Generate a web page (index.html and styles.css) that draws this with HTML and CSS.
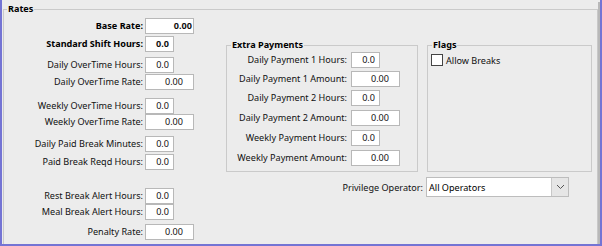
FILE: index.html
```
<!DOCTYPE html>
<html>
<head>
<meta charset="utf-8">
<link rel="stylesheet" href="styles.css">
</head>
<body>
<div class="window">
  <div class="client">
    <fieldset class="group rates">
      <legend>Rates</legend>
      <div class="rates-body">
        <div class="col-left">
          <div class="row g2"><span class="lbl strong">Base Rate:</span><span class="box wide strong tight">0.00</span></div>
          <div class="row g2"><span class="lbl strong">Standard Shift Hours:</span><span class="box small strong">0.0</span></div>
          <div class="row g5"><span class="lbl">Daily OverTime Hours:</span><span class="box small">0.0</span></div>
          <div class="row g1"><span class="lbl">Daily OverTime Rate:</span><span class="box wide">0.00</span></div>
          <div class="row g8"><span class="lbl">Weekly OverTime Hours:</span><span class="box small">0.0</span></div>
          <div class="row g0"><span class="lbl">Weekly OverTime Rate:</span><span class="box wide">0.00</span></div>
          <div class="row g6"><span class="lbl">Daily Paid Break Minutes:</span><span class="box small">0.0</span></div>
          <div class="row g2"><span class="lbl">Paid Break Reqd Hours:</span><span class="box small">0.0</span></div>
          <div class="row g18"><span class="lbl">Rest Break Alert Hours:</span><span class="box small">0.0</span></div>
          <div class="row g0"><span class="lbl">Meal Break Alert Hours:</span><span class="box small">0.0</span></div>
          <div class="row g4"><span class="lbl">Penalty Rate:</span><span class="box wide">0.00</span></div>
        </div>
        <div class="col-right">
          <div class="panels">
            <fieldset class="group extra">
              <legend>Extra Payments</legend>
              <div class="row g0"><span class="lbl">Daily Payment 1 Hours:</span><span class="box small">0.0</span></div>
              <div class="row g3"><span class="lbl">Daily Payment 1 Amount:</span><span class="box wide">0.00</span></div>
              <div class="row g3"><span class="lbl">Daily Payment 2 Hours:</span><span class="box small">0.0</span></div>
              <div class="row g4"><span class="lbl">Daily Payment 2 Amount:</span><span class="box wide">0.00</span></div>
              <div class="row g4"><span class="lbl">Weekly Payment Hours:</span><span class="box small">0.0</span></div>
              <div class="row g4"><span class="lbl">Weekly Payment Amount:</span><span class="box wide">0.00</span></div>
            </fieldset>
            <fieldset class="group flags">
              <legend>Flags</legend>
              <label class="check"><span class="checkbox"></span><span>Allow Breaks</span></label>
            </fieldset>
          </div>
          <div class="priv-row">
            <span class="priv-lbl">Privilege Operator:</span>
            <div class="combo">
              <span class="combo-text">All Operators</span>
              <span class="combo-btn">
                <svg width="9" height="6" viewBox="0 0 9 6"><path d="M1 1 L4.5 4.5 L8 1" fill="none" stroke="#555" stroke-width="1"/></svg>
              </span>
            </div>
          </div>
        </div>
      </div>
    </fieldset>
  </div>
</div>
</body>
</html>
```
FILE: styles.css
```
* { box-sizing: border-box; }
html, body { margin: 0; padding: 0; background: #ececec; }
body {
  font-family: "Noto Sans", "Open Sans", sans-serif;
  font-size: 9.1px;
  color: #111;
}
.window {
  width: 602px;
  height: 246px;
  background: #ececec;
  border-left: 2px solid #7474d4;
  border-right: 2px solid #7474d4;
  border-bottom: 2px solid #7474d4;
  overflow: hidden;
}
.client {
  height: 100%;
  border-right: 2px solid #b8b8b8;
  padding-left: 1px;
  padding-right: 0;
}
.group {
  margin: 0;
  padding: 0;
  border: 1px solid #cacaca;
  min-width: 0;
}
.group > legend {
  padding: 0 1px;
  margin-left: 3px;
  font-weight: bold;
  line-height: 14px;
  color: #000;
}
.rates {
  margin-top: 2px;
  height: 260px;
  border-right-color: #c8c8c8;
}
.rates > legend { margin-left: 3px; }
.rates-body {
  display: flex;
  align-items: flex-start;
}
.col-left {
  width: 190px;
  display: flex;
  flex-direction: column;
}
.row {
  display: flex;
  align-items: center;
  height: 16px;
}
.g0 { margin-top: 0; }
.g1 { margin-top: 1px; }
.g2 { margin-top: 2px; }
.g3 { margin-top: 3px; }
.g4 { margin-top: 4px; }
.g5 { margin-top: 5px; }
.g6 { margin-top: 6px; }
.g8 { margin-top: 8px; }
.g18 { margin-top: 18px; }
.lbl {
  width: 139px;
  flex: none;
  text-align: right;
  white-space: nowrap;
  line-height: 16px;
}
.strong { font-weight: bold; color: #000; }
.box {
  flex: none;
  margin-left: 2px;
  height: 16px;
  background: #fff;
  border: 1px solid #b8b8b8;
  text-align: right;
  line-height: 14px;
  color: #111;
}
.box.small { width: 29px; padding-right: 4px; }
.box.wide { width: 49px; padding-right: 10px; }
.box.tight { padding-right: 1px; }
.col-right {
  margin-left: 32px;
  width: 366px;
  display: flex;
  flex-direction: column;
}
.panels {
  display: flex;
  margin-top: 22px;
}
.extra {
  width: 192px;
  padding-bottom: 5px;
}
.extra > legend { margin-left: 4px; }
.extra .lbl { width: 120px; }
.extra .box { margin-left: 4px; }
.flags {
  margin-left: 9px;
  width: 165px;
}
.flags > legend { margin-left: 4px; }
.check {
  display: flex;
  align-items: center;
  gap: 3px;
  margin-left: 3px;
  margin-top: 1px;
  height: 14px;
}
.checkbox {
  width: 12px;
  height: 12px;
  border: 1px solid #444;
  background: #fff;
}
.priv-row {
  display: flex;
  align-items: center;
  justify-content: flex-end;
  margin-top: 5px;
  padding-right: 23px;
}
.priv-lbl { margin-right: 3px; white-space: nowrap; }
.combo {
  width: 143px;
  height: 20px;
  border: 1px solid #bdbdbd;
  background: #fff;
  display: flex;
  align-items: center;
}
.combo-text {
  flex: 1;
  padding-left: 2px;
  color: #000;
}
.combo-btn {
  width: 17px;
  height: 18px;
  background: #e6e6e6;
  border-left: 1px solid #c8c8c8;
  display: flex;
  align-items: center;
  justify-content: center;
}
```
